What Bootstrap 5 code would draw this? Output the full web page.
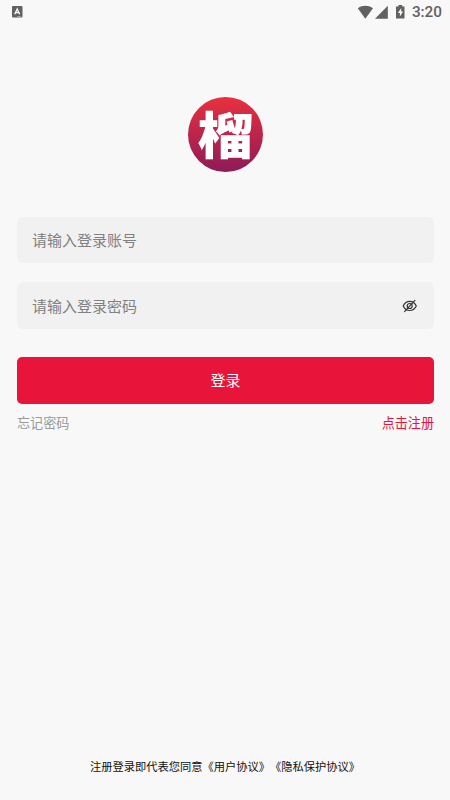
<!DOCTYPE html>
<html lang="zh-CN">
<head>
<meta charset="utf-8">
<meta name="viewport" content="width=device-width, initial-scale=1">
<title>登录</title>
<link href="https://cdn.jsdelivr.net/npm/bootstrap@5.3.0/dist/css/bootstrap.min.css" rel="stylesheet">
<style>
body{background:#f8f8f8;font-family:"Noto Sans CJK SC",sans-serif;font-size:15px;color:#222;height:800px;overflow:hidden}
.status{height:24px;padding:0 8px 0 11px;color:#616161}
.clock{font:500 15.3px/24px Roboto,sans-serif;margin-left:5px}
.logo{width:75px;height:75px;margin:73px 0 45px 1px;background:linear-gradient(#e8313d,#c0264a 45%,#8d1b58)}
.logo span{font-size:56px;font-weight:900;line-height:75px;color:#fff;transform:translateY(-3px) scaleY(.9)}
.form-area{padding:0 16px 0 17px}
.field{height:46px;background:#f1f1f1;border-radius:6px;padding:0 16px 0 15px}
.field.second{height:47px;margin:19px 0 28px}
.field input{font-size:15px;line-height:22px;color:#333}
.field input::placeholder{color:#808080;opacity:1}
.field input:focus{background:transparent;box-shadow:none}
.login{height:47px;background:#e81439;border-radius:5px;font-size:15px;--bs-btn-hover-bg:#e81439}
.links{font-size:13.1px;line-height:20px;margin-top:9px}
.forgot{color:#999}
.register{color:#e81439}
.terms{font-size:11.25px;line-height:18px;padding-bottom:25px;color:#111;font-kerning:none;text-spacing-trim:space-all;font-feature-settings:"chws" 0,"halt" 0}
.terms span{display:inline-block}
</style>
<script src="https://cdn.jsdelivr.net/npm/bootstrap@5.3.0/dist/js/bootstrap.bundle.min.js"></script>
</head>
<body class="d-flex flex-column">
<header class="status d-flex align-items-center justify-content-between">
  <svg width="12" height="12" viewBox="0 0 12 12"><rect x="1" width="10.5" height="11.5" rx="1" fill="#616161"/><path d="M3.7 8.3 6.2 3 8.7 8.3M4.7 6.7h3" fill="none" stroke="#fff" stroke-width="1.3"/><path d="M6 10.5h4" stroke="#bbb" stroke-width=".7"/></svg>
  <div class="d-flex align-items-center">
    <svg width="49" height="16" viewBox="359 3 49 16" fill="#616161"><path d="M358.8 7.3C363 4 369.5 4 374 7.3L366.3 17.7Z"/><path d="M388.8 4.7v13H376Z"/><path d="M399.5 4h3.7v1.4h2.3v12.1h-8.5V5.4h2.5Z"/><path d="m402.2 7-3.3 5.1h2v3.4l3.2-5h-1.9Z" fill="#f8f8f8"/></svg>
    <span class="clock">3:20</span>
  </div>
</header>
<main class="flex-grow-1 d-flex flex-column align-items-center">
  <div class="logo rounded-circle d-flex align-items-center justify-content-center flex-shrink-0"><span>榴</span></div>
  <form class="form-area w-100">
    <div class="field d-flex align-items-center">
      <input class="form-control border-0 bg-transparent p-0" type="text" placeholder="请输入登录账号" aria-label="登录账号">
    </div>
    <div class="field second d-flex align-items-center">
      <input class="form-control border-0 bg-transparent p-0" type="password" placeholder="请输入登录密码" aria-label="登录密码">
      <svg class="flex-shrink-0" width="16" height="14" viewBox="0 0 16 14" fill="none" stroke="#333" stroke-width="1.2" stroke-linecap="round"><path d="M1.2 7C4 .9 11.4.9 14.3 7 11.4 13 4 13 1.2 7Z"/><circle cx="7.7" cy="7" r="2.5"/><path d="M2.6 12.6 12.9 1.4"/></svg>
    </div>
    <button class="login btn btn-danger border-0 w-100 p-0" type="button">登录</button>
    <div class="links d-flex justify-content-between"><span class="forgot">忘记密码</span><span class="register">点击注册</span></div>
  </form>
</main>
<footer class="terms text-center"><span>注册登录即代表您同意</span><span>《用户协议》</span><span>《隐私保护协议》</span></footer>
</body>
</html>
